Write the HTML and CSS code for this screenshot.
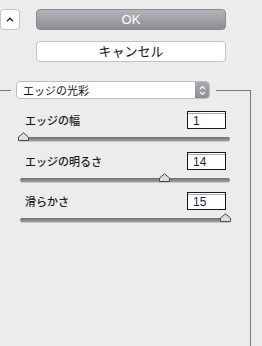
FILE: index.html
```html
<!DOCTYPE html>
<html lang="ja">
<head>
  <meta charset="UTF-8">
  <meta name="viewport" content="width=device-width, initial-scale=1.0">
  <title>エッジの光彩</title>
  <link rel="stylesheet" href="styles.css">
</head>
<body>
  <div class="top">
    <button class="btn-up" type="button">
      <svg width="8" height="5" viewBox="0 0 8 5"><path d="M1 4.2 L4 1.2 L7 4.2" fill="none" stroke="#222" stroke-width="1.4"/></svg>
    </button>
    <div class="actions">
      <button class="btn btn-ok" type="button">OK</button>
      <button class="btn btn-cancel" type="button">キャンセル</button>
    </div>
  </div>

  <div class="group">
    <div class="group-head">
      <div class="line-l"></div>
      <div class="select">
        <span class="select-text">エッジの光彩</span>
        <span class="stepper">
          <svg width="7" height="11" viewBox="0 0 7 11"><path d="M1 4 L3.5 1.5 L6 4 M1 7 L3.5 9.5 L6 7" fill="none" stroke="#fff" stroke-width="1.2"/></svg>
        </span>
      </div>
      <div class="line-r"></div>
    </div>

    <div class="group-body">
      <div class="row">
        <div class="row-top">
          <label>エッジの幅</label>
          <input class="num" type="text" value="1">
        </div>
        <div class="slider">
          <div class="track"></div>
          <svg class="thumb" style="--v:0" width="11" height="9" viewBox="0 0 11 9"><path d="M0.5 8.5 V5 L5.5 0.8 L10.5 5 V8.5 Z" fill="#dcdcdc" stroke="#4a4a4a"/></svg>
        </div>
      </div>
      <div class="row">
        <div class="row-top">
          <label>エッジの明るさ</label>
          <input class="num" type="text" value="14">
        </div>
        <div class="slider">
          <div class="track"></div>
          <svg class="thumb" style="--v:0.7" width="11" height="9" viewBox="0 0 11 9"><path d="M0.5 8.5 V5 L5.5 0.8 L10.5 5 V8.5 Z" fill="#dcdcdc" stroke="#4a4a4a"/></svg>
        </div>
      </div>
      <div class="row">
        <div class="row-top">
          <label>滑らかさ</label>
          <input class="num" type="text" value="15">
        </div>
        <div class="slider">
          <div class="track"></div>
          <svg class="thumb" style="--v:1" width="11" height="9" viewBox="0 0 11 9"><path d="M0.5 8.5 V5 L5.5 0.8 L10.5 5 V8.5 Z" fill="#dcdcdc" stroke="#4a4a4a"/></svg>
        </div>
      </div>
    </div>
  </div>
</body>
</html>
```

FILE: styles.css
```css
html, body {
  height: 100%;
}

body {
  margin: 0;
  background: #ececec;
  font-family: "Liberation Sans", "Noto Sans CJK JP", sans-serif;
  color: #1e1e1e;
  display: flex;
  flex-direction: column;
}

.top {
  display: flex;
  align-items: flex-start;
  padding-top: 9px;
}

.btn-up {
  width: 20px;
  height: 21px;
  padding: 0;
  margin: 0;
  background: #fff;
  border: 1px solid #c6c6c6;
  border-radius: 4px;
  display: flex;
  align-items: center;
  justify-content: center;
}

.actions {
  margin-left: 16px;
  width: 190px;
  display: flex;
  flex-direction: column;
  gap: 11px;
}

.btn {
  height: 21px;
  padding: 0;
  margin: 0;
  border-radius: 4px;
  font-family: "Liberation Sans", "Noto Sans CJK JP", sans-serif;
  font-size: 13px;
  line-height: 19px;
}

.btn-ok {
  background: linear-gradient(#b4b3b9, #8e8d93);
  border: 1px solid #8a898f;
  color: #fff;
}

.btn-cancel {
  background: #fff;
  border: 1px solid #c4c4c4;
  color: #111;
}

.group {
  flex: 1;
  margin-top: 19px;
  width: 251px;
  display: flex;
  flex-direction: column;
}

.group-head {
  display: flex;
  height: 18px;
}

.line-l {
  width: 11px;
  margin-top: 9px;
  border-top: 1px solid #7c7c7c;
}

.select {
  width: 194px;
  height: 18px;
  box-sizing: border-box;
  margin: 0 6px 0 5px;
  background: #fff;
  border: 1px solid #bdbdbd;
  border-radius: 4px;
  display: flex;
  align-items: center;
  overflow: hidden;
}

.select-text {
  flex: 1;
  padding-left: 6px;
  font-size: 11px;
  color: #111;
}

.stepper {
  width: 14px;
  height: 100%;
  background: linear-gradient(#a9a9ae, #8d8d92);
  display: flex;
  align-items: center;
  justify-content: center;
}

.line-r {
  flex: 1;
  margin-top: 9px;
  border-top: 1px solid #7c7c7c;
  border-right: 1px solid #7c7c7c;
}

.group-body {
  flex: 1;
  border-right: 1px solid #7c7c7c;
  padding: 12px 20px 0 20px;
}

.row {
  height: 40px;
}

.row + .row {
  margin-top: 0.5px;
}

.row-top {
  display: flex;
  align-items: center;
  justify-content: space-between;
  height: 18px;
}

.row-top label {
  padding-left: 5px;
  font-size: 11px;
  font-weight: 500;
  color: #1a1a1a;
}

.num {
  width: 39px;
  height: 18px;
  box-sizing: border-box;
  margin: 0 4px 0 0;
  padding: 2px 0 0 5px;
  border: 1px solid #1a1a1a;
  background: #fff;
  box-shadow: inset 0 1px 0 #fff, inset 0 2px 0 #a8a8a8;
  font-family: "Liberation Sans", sans-serif;
  font-size: 12px;
  color: #1b1b3a;
  outline: none;
}

.slider {
  position: relative;
  height: 22px;
}

.track {
  position: absolute;
  left: 0;
  right: 0;
  top: 8px;
  height: 4px;
  border-radius: 2px;
  background: linear-gradient(#6f6f6f, #a0a0a0);
  box-shadow: 0 1px 0 #c8c8c8;
}

.thumb {
  position: absolute;
  top: 3px;
  left: calc(var(--v) * 202px - 2px);
}
```
